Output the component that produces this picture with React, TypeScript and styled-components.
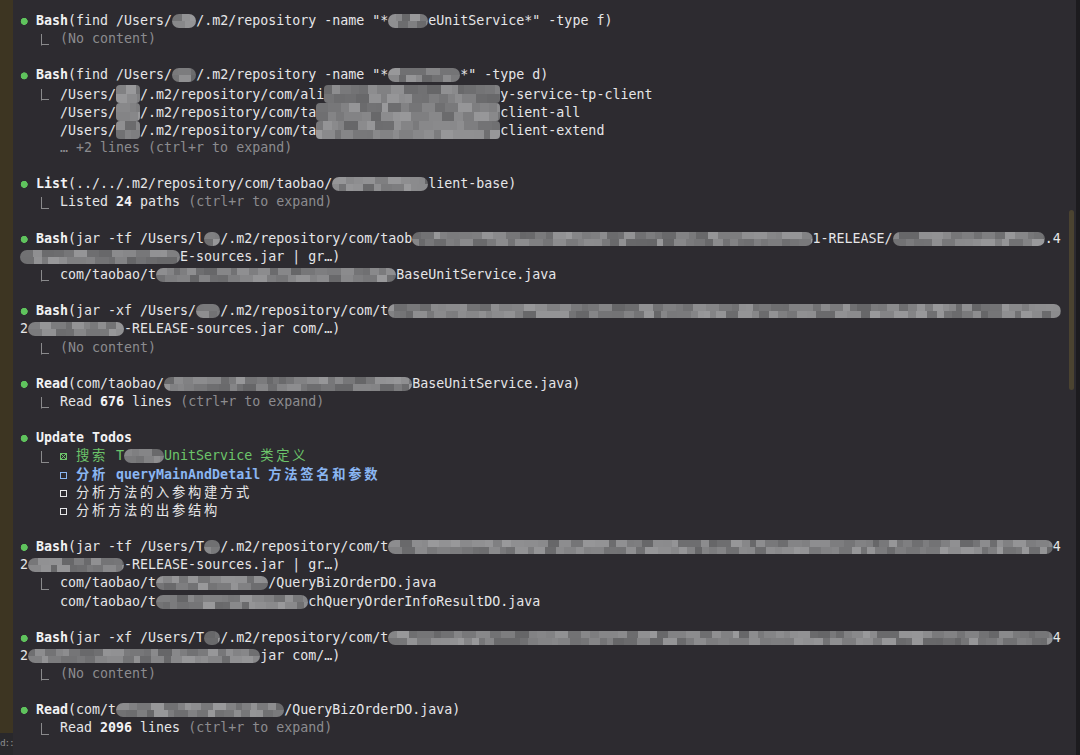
import React from "react";
import styled, { createGlobalStyle, css } from "styled-components";

const LH = 18.15;

const Global = createGlobalStyle`
  html, body { margin: 0; padding: 0; background: #2d2b30; overflow: hidden; }
  #root { width: 1080px; height: 755px; }
`;

function mosaic(w: number, seed: number): string {
  let s = (seed * 7919 + 104729) % 233280;
  const rnd = () => {
    s = (s * 9301 + 49297) % 233280;
    return s / 233280;
  };
  const px = w * 8.01 + 2;
  const row = () => {
    let x = 0;
    const stops: string[] = [];
    while (x < px) {
      const step = 6 + Math.floor(rnd() * 9);
      const g = 0x66 + Math.floor(rnd() * 0x34);
      stops.push(`rgb(${g},${g},${g + 2}) ${x}px ${x + step}px`);
      x += step;
    }
    return `linear-gradient(90deg, ${stops.join(", ")})`;
  };
  return `${row()} top / 100% 50% no-repeat, ${row()} bottom / 100% 50% no-repeat`;
}

const Screen = styled.div`
  display: flex;
  width: 1080px;
  height: 755px;
  background: #2d2b30;
  overflow: hidden;
  font-family: "DejaVu Sans Mono", "Noto Sans CJK SC", monospace;
  font-size: 13.3px;
  color: #e6e6e8;
`;

const Gutter = styled.div`
  width: 13px;
  flex-shrink: 0;
  display: flex;
  flex-direction: column;
`;

const GutterStrip = styled.div`
  flex: 1;
  background: #3d3522;
`;

const GutterFoot = styled.div`
  height: 22px;
  background: #29282b;
  color: #8a8a8c;
  font-size: 9.5px;
  letter-spacing: -1.2px;
  line-height: 20px;
  white-space: nowrap;
  overflow: hidden;
`;

const Terminal = styled.main`
  flex: 1;
  min-width: 0;
  padding: 12px 0 0 7px;
  display: flex;
  flex-direction: column;
`;

const ScrollRail = styled.div`
  width: 8px;
  flex-shrink: 0;
  padding: 210px 0 0 1px;
  box-sizing: border-box;
`;

const Thumb = styled.div`
  width: 5px;
  height: 180px;
  border-radius: 3px;
  background: #4b4330;
`;

const Edge = styled.div`
  width: 4px;
  flex-shrink: 0;
  background: #1c1b1e;
`;

const Entry = styled.section`
  margin-bottom: ${LH}px;
`;

const Row = styled.div<{ $indent?: number }>`
  height: ${LH}px;
  line-height: ${LH}px;
  white-space: pre;
  padding-left: ${(p) => p.$indent ?? 0}ch;
`;

const Dot = styled.span`
  display: inline-block;
  width: 2ch;
  height: ${LH}px;
  vertical-align: top;
  background: radial-gradient(circle at 4.2px 52%, #5fc35d 3.2px, transparent 3.8px);
`;

const Elbow = styled.span`
  display: inline-block;
  width: 3ch;
  height: ${LH}px;
  vertical-align: top;
  background: linear-gradient(#8a8a8c, #8a8a8c) 4.6px 4px / 1.2px 11.5px no-repeat,
    linear-gradient(#8a8a8c, #8a8a8c) 4.6px 14.3px / 8px 1.2px no-repeat;
`;

const Tool = styled.b`
  font-weight: 700;
  color: #f2f2f4;
`;

const Num = styled.b`
  font-weight: 700;
  color: #f2f2f4;
`;

const Dim = styled.span`
  color: #8c8b8f;
`;

const Done = styled.span`
  color: #6cc46a;
`;

const Current = styled.span`
  color: #8ab6f2;
  font-weight: 700;
`;

const Wide = styled.span`
  letter-spacing: calc(2ch - 1em);
`;

const Box = styled.span<{ $checked?: boolean }>`
  display: inline-block;
  box-sizing: border-box;
  width: 7px;
  height: 7px;
  margin-right: calc(1ch - 7px);
  border: 1px solid currentColor;
  vertical-align: 0;
  ${(p) =>
    p.$checked &&
    css`
      background: linear-gradient(45deg, transparent 42%, currentColor 42% 58%, transparent 58%),
        linear-gradient(-45deg, transparent 42%, currentColor 42% 58%, transparent 58%);
    `}
`;

const Mosaic = styled.span<{ $w: number; $seed: number; $tall?: boolean }>`
  display: inline-block;
  width: ${(p) => p.$w}ch;
  height: ${(p) => (p.$tall ? LH : 14)}px;
  vertical-align: ${(p) => (p.$tall ? "-4.45px" : "-3px")};
  border-radius: ${(p) => (p.$tall ? 4 : 7)}px;
  background: ${(p) => mosaic(p.$w, p.$seed)};
  filter: blur(0.6px);
`;

const Expand = () => <Dim>(ctrl+r to expand)</Dim>;

export default function App() {
  return (
    <>
      <Global />
      <Screen>
        <Gutter>
          <GutterStrip />
          <GutterFoot>d::</GutterFoot>
        </Gutter>
        <Terminal>
          <Entry>
            <Row>
              <Dot />
              <Tool>Bash</Tool>(find /Users/<Mosaic $w={3} $seed={1} />/.m2/repository -name "*
              <Mosaic $w={5} $seed={2} />eUnitService*" -type f)
            </Row>
            <Row $indent={2}>
              <Elbow />
              <Dim>(No content)</Dim>
            </Row>
          </Entry>

          <Entry>
            <Row>
              <Dot />
              <Tool>Bash</Tool>(find /Users/<Mosaic $w={3} $seed={3} />/.m2/repository -name "*
              <Mosaic $w={9} $seed={4} />*" -type d)
            </Row>
            <Row $indent={2}>
              <Elbow />
              /Users/<Mosaic $w={3} $seed={5} $tall />/.m2/repository/com/ali
              <Mosaic $w={22} $seed={6} $tall />y-service-tp-client
            </Row>
            <Row $indent={5}>
              /Users/<Mosaic $w={3} $seed={7} $tall />/.m2/repository/com/ta
              <Mosaic $w={23} $seed={8} $tall />client-all
            </Row>
            <Row $indent={5}>
              /Users/<Mosaic $w={3} $seed={9} $tall />/.m2/repository/com/ta
              <Mosaic $w={23} $seed={10} $tall />client-extend
            </Row>
            <Row $indent={5}>
              <Dim>… +2 lines (ctrl+r to expand)</Dim>
            </Row>
          </Entry>

          <Entry>
            <Row>
              <Dot />
              <Tool>List</Tool>(../../.m2/repository/com/taobao/<Mosaic $w={12} $seed={11} />lient-base)
            </Row>
            <Row $indent={2}>
              <Elbow />
              Listed <Num>24</Num> paths <Expand />
            </Row>
          </Entry>

          <Entry>
            <Row>
              <Dot />
              <Tool>Bash</Tool>(jar -tf /Users/l<Mosaic $w={2} $seed={12} />/.m2/repository/com/taob
              <Mosaic $w={50} $seed={13} />1-RELEASE/<Mosaic $w={19} $seed={14} />.4
            </Row>
            <Row>
              <Mosaic $w={20} $seed={15} />E-sources.jar | gr…)
            </Row>
            <Row $indent={2}>
              <Elbow />
              com/taobao/t<Mosaic $w={30} $seed={16} />BaseUnitService.java
            </Row>
          </Entry>

          <Entry>
            <Row>
              <Dot />
              <Tool>Bash</Tool>(jar -xf /Users/<Mosaic $w={3} $seed={17} />/.m2/repository/com/t
              <Mosaic $w={84} $seed={18} />
            </Row>
            <Row>
              2<Mosaic $w={12} $seed={19} />-RELEASE-sources.jar com/…)
            </Row>
            <Row $indent={2}>
              <Elbow />
              <Dim>(No content)</Dim>
            </Row>
          </Entry>

          <Entry>
            <Row>
              <Dot />
              <Tool>Read</Tool>(com/taobao/<Mosaic $w={31} $seed={20} />BaseUnitService.java)
            </Row>
            <Row $indent={2}>
              <Elbow />
              Read <Num>676</Num> lines <Expand />
            </Row>
          </Entry>

          <Entry>
            <Row>
              <Dot />
              <Tool>Update Todos</Tool>
            </Row>
            <Row $indent={2}>
              <Elbow />
              <Done>
                <Box $checked /> <Wide>搜索</Wide> T<Mosaic $w={5} $seed={21} />UnitService{" "}
                <Wide>类定义</Wide>
              </Done>
            </Row>
            <Row $indent={5}>
              <Current>
                <Box /> <Wide>分析</Wide> queryMainAndDetail <Wide>方法签名和参数</Wide>
              </Current>
            </Row>
            <Row $indent={5}>
              <Box /> <Wide>分析方法的入参构建方式</Wide>
            </Row>
            <Row $indent={5}>
              <Box /> <Wide>分析方法的出参结构</Wide>
            </Row>
          </Entry>

          <Entry>
            <Row>
              <Dot />
              <Tool>Bash</Tool>(jar -tf /Users/T<Mosaic $w={2} $seed={22} />/.m2/repository/com/t
              <Mosaic $w={83} $seed={23} />4
            </Row>
            <Row>
              2<Mosaic $w={12} $seed={24} />-RELEASE-sources.jar | gr…)
            </Row>
            <Row $indent={2}>
              <Elbow />
              com/taobao/t<Mosaic $w={14} $seed={25} />/QueryBizOrderDO.java
            </Row>
            <Row $indent={5}>
              com/taobao/t<Mosaic $w={19} $seed={26} />chQueryOrderInfoResultDO.java
            </Row>
          </Entry>

          <Entry>
            <Row>
              <Dot />
              <Tool>Bash</Tool>(jar -xf /Users/T<Mosaic $w={2} $seed={27} />/.m2/repository/com/t
              <Mosaic $w={83} $seed={28} />4
            </Row>
            <Row>
              2<Mosaic $w={29} $seed={29} />jar com/…)
            </Row>
            <Row $indent={2}>
              <Elbow />
              <Dim>(No content)</Dim>
            </Row>
          </Entry>

          <Entry>
            <Row>
              <Dot />
              <Tool>Read</Tool>(com/t<Mosaic $w={21} $seed={30} />/QueryBizOrderDO.java)
            </Row>
            <Row $indent={2}>
              <Elbow />
              Read <Num>2096</Num> lines <Expand />
            </Row>
          </Entry>
        </Terminal>
        <ScrollRail>
          <Thumb />
        </ScrollRail>
        <Edge />
      </Screen>
    </>
  );
}
